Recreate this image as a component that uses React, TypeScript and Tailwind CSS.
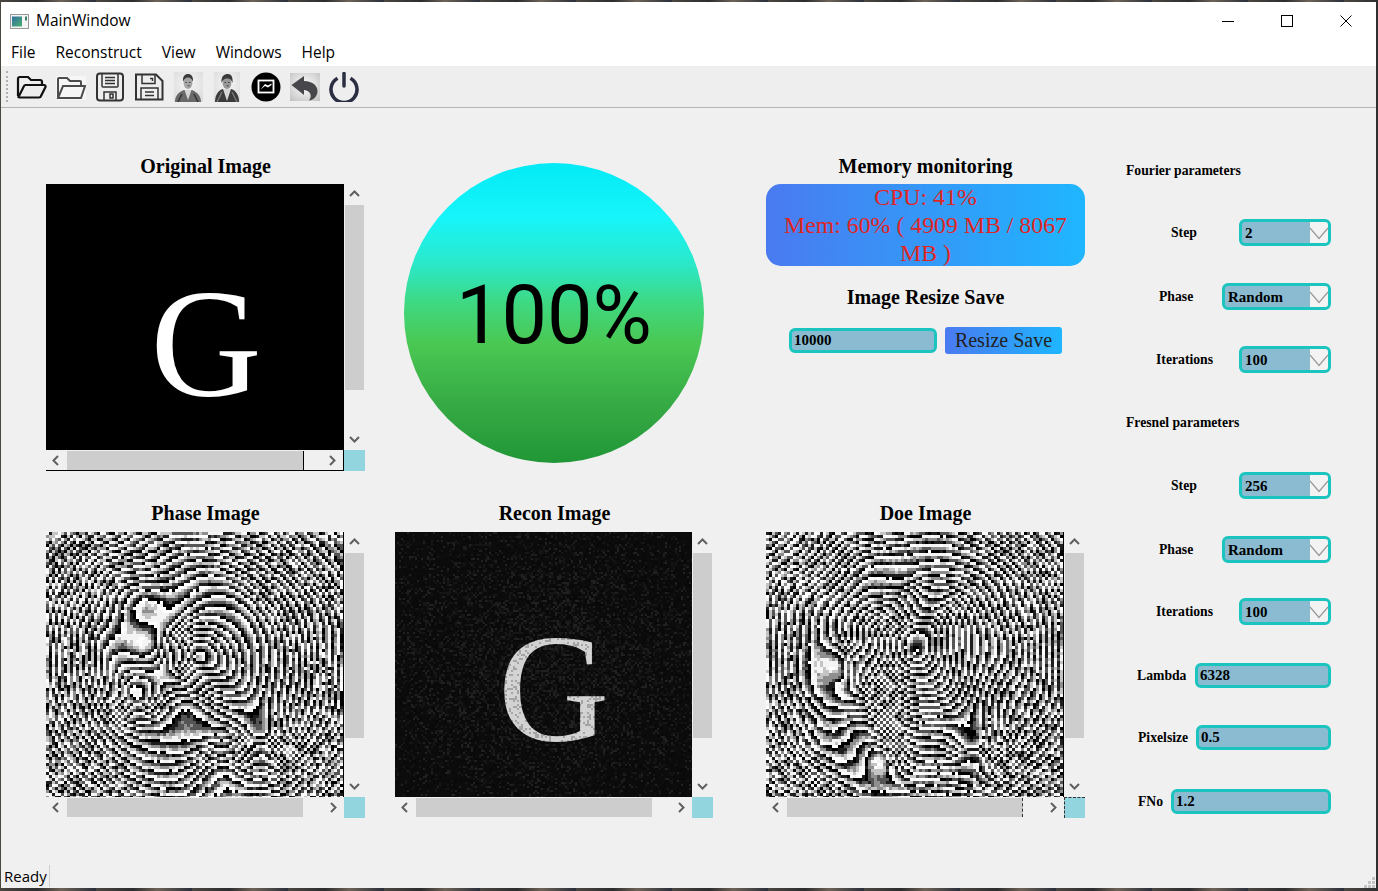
import React from "react";

const serif = "font-['Liberation_Serif',serif]";

type Bump = [number, number, number, number];

function rng(seed: number) {
  let s = seed;
  return () => {
    s = (s * 1664525 + 1013904223) % 4294967296;
    return s / 4294967296;
  };
}

function phasePaths(seed: number, bumps: Bump[], cx0: number, cy0: number) {
  const W = 298, H = 265, B = 3;
  const levels = 7;
  const ds: string[] = Array.from({ length: levels }, () => "");
  const r = rng(seed);
  const wob = Array.from({ length: 6 }, () => [(r() - 0.5) * 0.16, (r() - 0.5) * 0.16, r() * 6, r() * 0.22 + 0.12]);
  for (let y = 0; y < H; y += B) {
    let runStart = 0, runLevel = -1;
    for (let x = 0; x <= W; x += B) {
      let lvl = -2;
      if (x < W) {
        const dx = x - cx0, dy = (y - cy0) * 1.08;
        const rad = Math.hypot(dx, dy);
        let p = 0.1 * rad + 0.00016 * rad * rad;
        for (const [cx, cy, s, A] of bumps) {
          const d = (x - cx) ** 2 + (y - cy) ** 2;
          p += A * Math.exp(-d / (2 * s * s));
        }
        for (const [fx, fy, ph, A] of wob) p += A * Math.sin(fx * x + fy * y + ph);
        p += (r() - 0.5) * (0.07 + rad * 0.0016);
        const v = p - Math.floor(p);
        lvl = Math.min(levels - 1, Math.floor(v * levels));
      }
      if (lvl !== runLevel) {
        if (runLevel >= 0) ds[runLevel] += `M${runStart} ${y}H${x}V${y + B}H${runStart}Z`;
        runStart = x;
        runLevel = lvl;
      }
    }
  }
  return ds;
}

const PHASE_COLORS = ["#000000", "#1e1e1e", "#555555", "#8f8f8f", "#c4c4c4", "#f4f4f4", "#ffffff"];

const phaseA = phasePaths(
  7,
  [
    [105, 112, 20, 4],
    [135, 175, 24, 5],
    [215, 205, 18, -4],
    [85, 165, 15, -3],
    [175, 230, 20, 4],
    [125, 85, 16, 2.500],
  ],
  150,
  125
);
const phaseB = phasePaths(
  19,
  [
    [75, 130, 18, 4],
    [100, 190, 22, 5],
    [210, 215, 18, -4],
    [160, 90, 24, -4],
    [115, 225, 14, 3],
    [135, 60, 20, 2.500],
  ],
  148,
  120
);

function noisePaths() {
  const r = rng(41);
  let light = "", mid = "", dark = "";
  for (let y = 0; y < 265; y += 2) {
    for (let x = 0; x < 297; x += 2) {
      const d = Math.hypot((x - 148) / 148, (y - 132) / 132);
      const v = r();
      const t = 0.5 - 0.3 * d;
      if (v < t * 0.35) light += `M${x} ${y}h2v2h-2z`;
      else if (v < t) mid += `M${x} ${y}h2v2h-2z`;
      else if (v > 0.75) dark += `M${x} ${y}h2v2h-2z`;
    }
  }
  return { light, mid, dark };
}
const noise = noisePaths();

function PhaseImage({ paths }: { paths: string[] }) {
  return (
    <svg width="100%" height="100%" viewBox="0 0 298 265" preserveAspectRatio="none" shapeRendering="crispEdges" className="block">
      {paths.map((d, i) => (
        <path key={i} d={d} fill={PHASE_COLORS[i]} />
      ))}
    </svg>
  );
}

function Chevron({ dir }: { dir: "up" | "down" | "left" | "right" }) {
  const d = {
    up: "M1 7 5.5 2.5 10 7",
    down: "M1 3 5.5 7.5 10 3",
    left: "M7 1 2.5 5.5 7 10",
    right: "M3 1 7.5 5.5 3 10",
  }[dir];
  return (
    <svg width="11" height="11" viewBox="0 0 11 11" className="block">
      <path d={d} fill="none" stroke="#606060" strokeWidth="2" />
    </svg>
  );
}

function Viewer({
  title,
  imgW,
  children,
  outlined,
  dotted,
  imgH,
  lower,
}: {
  title: string;
  imgW: string;
  imgH: string;
  children: React.ReactNode;
  outlined?: boolean;
  dotted?: boolean;
  lower?: boolean;
}) {
  return (
    <div className="w-full">
      <h2 className={`${serif} h-5 ${lower ? "mb-[9px]" : "mb-2"} text-center text-[20px] font-bold leading-5 text-black`}>{title}</h2>
      <div className="flex">
        <div className={`${imgW} ${imgH} shrink-0 overflow-hidden bg-black`}>{children}</div>
        <div className="flex w-[21px] shrink-0 flex-col items-center">
          <div className="flex h-[21px] w-full items-center justify-center"><Chevron dir="up" /></div>
          <div className="h-[185px] w-[19px] bg-[#cdcdcd]" />
          <div className="flex-1" />
          <div className="flex h-[21px] w-full items-center justify-center"><Chevron dir="down" /></div>
        </div>
      </div>
      <div className="flex h-[21px]">
        <div className={`${imgW} flex h-[21px] shrink-0 items-center ${outlined ? "border-b border-r border-black" : ""}`}>
          <div className="flex w-[21px] shrink-0 justify-center"><Chevron dir="left" /></div>
          <div className={`h-[19px] bg-[#cdcdcd] ${outlined ? "w-[237px] border-r border-black" : "w-[236px]"} ${dotted ? "border-r border-dashed border-[#333]" : ""}`} />
          <div className="flex flex-1 justify-end pr-[5px]"><Chevron dir="right" /></div>
        </div>
        <div className={`h-[21px] w-[21px] bg-[#93d5df] ${dotted ? "border-l border-t border-dashed border-[#333]" : ""}`} />
      </div>
    </div>
  );
}

function Field({ value, className }: { value: string; className: string }) {
  return (
    <div className={`${className} ${serif} ml-auto flex items-center rounded-[6px] border-[3px] border-[#1bc4bf] bg-[#8abbd1] pl-[2px] text-[15px] font-bold text-black`}>
      {value}
    </div>
  );
}

function Combo({ value, className }: { value: string; className: string }) {
  return (
    <div className={`${className} ${serif} ml-auto flex h-[27px] items-stretch overflow-hidden rounded-[6px] border-[3px] border-[#1bc4bf] bg-[#8abbd1] text-[15px] font-bold text-black`}>
      <div className="flex flex-1 items-center pl-[3px] pt-px">{value}</div>
      <div className="flex w-[18px] shrink-0 items-center justify-center bg-[#f3f3f3]">
        <svg width="18" height="14" viewBox="0 0 18 14" className="block shrink-0">
          <path d="M0 2 9 12.500 18 2" fill="none" stroke="#999" strokeWidth="1.200" />
        </svg>
      </div>
    </div>
  );
}

function Row({ label, labelClass, children, className }: { label: string; labelClass: string; children: React.ReactNode; className: string }) {
  return (
    <div className={`${className} flex items-center`}>
      <div className={`${labelClass} ${serif} text-[13.700px] font-bold leading-4 text-black`}>{label}</div>
      {children}
    </div>
  );
}

function Portrait({ variant }: { variant: number }) {
  return (
    <svg width="30" height="30" viewBox="0 0 30 30" className="block">
      <defs>
        <radialGradient id={`pb${variant}`} cx="50%" cy="40%" r="70%">
          <stop offset="0%" stopColor="#f6f6f6" />
          <stop offset="100%" stopColor="#dcdcdc" />
        </radialGradient>
        <filter id={`soft${variant}`} x="-10%" y="-10%" width="120%" height="120%">
          <feGaussianBlur stdDeviation="0.500" />
        </filter>
      </defs>
      <rect x={variant ? 2 : 1} width={variant ? 26 : 29} height="30" fill={`url(#pb${variant})`} />
      <g filter={`url(#soft${variant})`}>
        <path d={variant ? "M3 30C3 22 7 18 11 17L19 17C23 18 27 22 27 30Z" : "M2 30C2 23 6 20 11 18L19 18C24 20 28 24 28 30Z"} fill={variant ? "#3a3a3a" : "#6a6a6a"} />
        <path d={variant ? "M11 17 15 29 19 17Z" : "M11.500 18 15 28 18.500 18Z"} fill="#d6d6d6" />
        <path d={variant ? "M5 30 10 20M25 30 20 20" : "M5 30 9 22M25 30 21 22"} stroke={variant ? "#777" : "#333"} strokeWidth="1.500" fill="none" />
        <ellipse cx="15" cy="11" rx="4.400" ry="6" fill={variant ? "#999" : "#a6a6a6"} />
        <path d={variant ? "M9.500 11C9 4 12 2 16 2 20 2 21 6 20.500 11 19.500 7 17 6 14 6.500 12 7 10.500 8.500 9.500 11Z" : "M10 10C9.500 4 12 2 15 2 18 2 20.500 4 20 10 19 7 17 5.500 15 5.500 13 5.500 11 7 10 10Z"} fill="#3a3a3a" />
        <path d="M12.500 10.500h1.500M16 10.500h1.500M14.800 13.800h1.800" stroke="#333" strokeWidth="0.900" />
      </g>
    </svg>
  );
}

function Toolbar() {
  return (
    <div className="flex h-[42px] items-center border-b border-[#b4b4b4] bg-[#eeeeee] pl-[5px]">
      <div className="mr-[8px] h-[31px] w-[2px] border-l-2 border-dotted border-[#b0b0b0]" />
      <div className="flex items-center gap-[9px]">
        <svg width="31" height="30" viewBox="0 0 31 30" className="block">
          <path d="M2 24V7a2 2 0 0 1 2-2h8l3 3h9a2 2 0 0 1 2 2v3" fill="none" stroke="#111" strokeWidth="2.200" />
          <path d="M2.500 25 8 14a2 2 0 0 1 1.500-1H28a1.500 1.500 0 0 1 1.500 2l-4.500 9a2 2 0 0 1-2 1.500H3.500Z" fill="none" stroke="#111" strokeWidth="2.200" />
        </svg>
        <svg width="30" height="30" viewBox="0 0 30 30" className="block">
          <rect y="4" width="30" height="24" fill="#f6f6f6" />
          <path d="M2 25V7a1 1 0 0 1 1-1h8l3 3h10a1 1 0 0 1 1 1v4" fill="none" stroke="#4c4c4c" strokeWidth="2" />
          <path d="M2 26 7 14H29L25 26Z" fill="none" stroke="#4c4c4c" strokeWidth="2" />
        </svg>
        <svg width="30" height="30" viewBox="0 0 30 30" className="block">
          <rect x="2" y="1.500" width="26" height="27" rx="3" fill="none" stroke="#333" strokeWidth="2" />
          <path d="M7 2v12a1 1 0 0 0 1 1h14a1 1 0 0 0 1-1V2" fill="none" stroke="#333" strokeWidth="1.500" />
          <path d="M10 5.500h10M10 8.500h10M10 11.500h10" stroke="#333" strokeWidth="1.300" />
          <path d="M9 28v-8h12v8M15 22v4h3v-4Z" fill="none" stroke="#333" strokeWidth="1.500" />
        </svg>
        <svg width="30" height="30" viewBox="0 0 30 30" className="block">
          <path d="M2 2.500H22L28.500 9V27.500H2Z" fill="none" stroke="#333" strokeWidth="2" />
          <path d="M8 3V11.500H21V3M16 6.500h2.500V9" fill="none" stroke="#333" strokeWidth="1.500" />
          <path d="M7 27V16H24V27M11 20h9M11 23.500h9" fill="none" stroke="#333" strokeWidth="1.500" />
        </svg>
        <Portrait variant={0} />
        <Portrait variant={1} />
        <svg width="30" height="30" viewBox="0 0 30 30" className="block">
          <circle cx="15" cy="15" r="14.500" fill="#000" />
          <rect x="7.500" y="8.500" width="15" height="12" fill="none" stroke="#fff" strokeWidth="1.800" />
          <path d="M9.500 17.500 14 14 17 15.500 20.500 13V11.500L17 13.500 14 12Z" fill="#fff" />
        </svg>
        <svg width="30" height="30" viewBox="0 0 30 30" className="block">
          <defs>
            <radialGradient id="undoBg" cx="50%" cy="45%" r="70%">
              <stop offset="0%" stopColor="#fff" />
              <stop offset="100%" stopColor="#c4c4c4" />
            </radialGradient>
          </defs>
          <rect y="1" width="30" height="28" fill="url(#undoBg)" />
          <path d="M1.500 13 14 4V9C23 9 28 14 27.500 20 27 25 23 28 19 28.500 22 25 21.500 19 14 18V23Z" fill="#47474b" />
        </svg>
        <svg width="30" height="30" viewBox="0 0 30 30" className="block">
          <path d="M8.500 6.200A13 13 0 1 0 21.500 6.200" fill="none" stroke="#2b2d42" strokeWidth="3.500" />
          <path d="M15 1.500V14" stroke="#2b2d42" strokeWidth="3.500" strokeLinecap="round" />
        </svg>
      </div>
    </div>
  );
}

export default function App() {
  return (
    <div className="flex h-[891px] w-[1378px] flex-col bg-[repeating-linear-gradient(90deg,#4a4640_0px,#2c2c2e_37px,#6d6256_61px,#2a2f3a_96px)] pb-[3px] pl-px pr-[2px] pt-[2px]">
      <div className="flex min-h-0 flex-1 flex-col bg-[#f0f0f0] font-['Open_Sans',sans-serif] text-black">
        <div className="flex h-[38px] items-center bg-white pl-[9px]">
          <svg width="19" height="15" viewBox="0 0 19 15" className="mr-[7px] block">
            <defs>
              <linearGradient id="winIcon" x1="0" y1="0" x2="1" y2="1">
                <stop offset="0%" stopColor="#2f6f9f" />
                <stop offset="100%" stopColor="#4caf6f" />
              </linearGradient>
            </defs>
            <rect x="0.500" y="0.500" width="18" height="14" fill="#f5f5f5" stroke="#999" />
            <rect x="2" y="2.500" width="10" height="10" fill="url(#winIcon)" />
            <rect x="15" y="2.500" width="2" height="4" fill="#3d7f6f" />
          </svg>
          <span className="text-[15.500px]">MainWindow</span>
          <div className="ml-auto flex h-full items-center pr-px">
            <div className="flex w-[59px] justify-center">
              <div className="h-px w-3 bg-black" />
            </div>
            <div className="flex w-[59px] justify-center">
              <div className="h-3 w-3 border border-black" />
            </div>
            <div className="flex w-[59px] justify-center">
              <svg width="12" height="12" viewBox="0 0 12 12" className="block">
                <path d="M0.500 0.500 11.500 11.500M11.500 0.500 0.500 11.500" stroke="#000" strokeWidth="1" />
              </svg>
            </div>
          </div>
        </div>
        <div className="flex h-[26px] items-center gap-5 bg-white pl-[10px] text-[15.500px]">
          <span>File</span>
          <span>Reconstruct</span>
          <span>View</span>
          <span>Windows</span>
          <span>Help</span>
        </div>
        <Toolbar />

        <div className="flex min-h-0 flex-1 pl-[45px] pt-[48px]">
          <div className="w-[319px] shrink-0">
            <div className="h-[347px]">
              <Viewer title="Original Image" imgW="w-[298px]" imgH="h-[266px]" outlined>
                <div className={`${serif} flex h-full items-start justify-center pl-[22px] pt-[82px] text-[154px] font-normal leading-[154px] text-white`}>G</div>
              </Viewer>
            </div>
            <Viewer title="Phase Image" imgW="w-[298px]" imgH="h-[265px]" lower>
              <PhaseImage paths={phaseA} />
            </Viewer>
          </div>

          <div className="ml-[30px] w-[319px] shrink-0">
            <div className="h-[347px] pl-[9px] pt-[7px]">
              <div className="flex h-[300px] w-[300px] items-center justify-center rounded-full bg-[linear-gradient(180deg,#03eaf6_0%,#16f5fa_18%,#2be8c8_34%,#3fd880_47%,#4ac853_60%,#38ad46_78%,#219636_100%)] pt-[4px]">
                <span className="font-['Roboto',sans-serif] text-[81px] leading-none text-black">100%</span>
              </div>
            </div>
            <Viewer title="Recon Image" imgW="w-[297px]" imgH="h-[265px]" lower>
              <div className="relative h-full w-full bg-[#0c0c0c]">
                <div className={`${serif} flex h-full items-start justify-center pl-[20px] pt-[79px] text-[154px] leading-[154px] text-[#d2d2d2]`}>G</div>
                <svg width="297" height="265" viewBox="0 0 297 265" shapeRendering="crispEdges" className="absolute left-0 top-0 block">
                  <path d={noise.light} fill="#fff" fillOpacity="0.09" />
                  <path d={noise.mid} fill="#fff" fillOpacity="0.045" />
                  <path d={noise.dark} fill="#000" fillOpacity="0.22" />
                </svg>
              </div>
            </Viewer>
          </div>

          <div className="ml-[52px] w-[319px] shrink-0">
            <div className="h-[347px]">
              <h2 className={`${serif} mb-2 h-5 text-center text-[20px] font-bold leading-5`}>Memory monitoring</h2>
              <div className={`${serif} h-[82px] overflow-hidden rounded-[15px] bg-[linear-gradient(90deg,#4a7af0,#1fb6ff)] px-3 text-center text-[23.800px] leading-[28px] text-[#e02525]`}>
                <div className="-mt-px">
                  CPU: 41%
                  <br />
                  Mem: 60% ( 4909 MB / 8067 MB )
                </div>
              </div>
              <h2 className={`${serif} mt-[21px] h-5 text-center text-[20px] font-bold leading-5`}>Image Resize Save</h2>
              <div className="mt-[20px] flex items-center pl-[23px]">
                <div className={`${serif} flex h-[25px] w-[148px] items-center rounded-[6px] border-[3px] border-[#1bc4bf] bg-[#8abbd1] pl-[2px] text-[15px] font-bold`}>10000</div>
                <div className={`${serif} ml-[8px] flex h-[27px] w-[117px] items-center justify-center rounded-[3px] bg-[linear-gradient(90deg,#4a7af0,#1fb6ff)] pb-[2px] text-[20px] text-[#222]`}>Resize Save</div>
              </div>
            </div>
            <Viewer title="Doe Image" imgW="w-[298px]" imgH="h-[265px]" dotted lower>
              <PhaseImage paths={phaseB} />
            </Viewer>
          </div>

          <div className="ml-[41px] flex w-[205px] shrink-0 flex-col">
            <div className={`${serif} mt-[7px] h-4 text-[13.700px] font-bold leading-4`}>Fourier parameters</div>
            <Row className="mt-[40px]" label="Step" labelClass="ml-[45px]"><Combo value="2" className="w-[92px]" /></Row>
            <Row className="mt-[37px]" label="Phase" labelClass="ml-[33px]"><Combo value="Random" className="w-[109px]" /></Row>
            <Row className="mt-[36px]" label="Iterations" labelClass="ml-[30px]"><Combo value="100" className="w-[92px]" /></Row>
            <div className={`${serif} mt-[42px] h-4 text-[13.700px] font-bold leading-4`}>Fresnel parameters</div>
            <Row className="mt-[41px]" label="Step" labelClass="ml-[45px]"><Combo value="256" className="w-[92px]" /></Row>
            <Row className="mt-[37px]" label="Phase" labelClass="ml-[33px]"><Combo value="Random" className="w-[109px]" /></Row>
            <Row className="mt-[35px]" label="Iterations" labelClass="ml-[30px]"><Combo value="100" className="w-[92px]" /></Row>
            <Row className="mt-[38px]" label="Lambda" labelClass="ml-[11px]"><Field value="6328" className="h-[25px] w-[136px]" /></Row>
            <Row className="mt-[37px]" label="Pixelsize" labelClass="ml-[12px]"><Field value="0.5" className="h-[25px] w-[135px]" /></Row>
            <Row className="mt-[39px]" label="FNo" labelClass="ml-[12px]"><Field value="1.2" className="h-[25px] w-[160px]" /></Row>
          </div>
        </div>

        <div className="flex h-[24px] items-center pl-[3px] text-[15px]">
          <div className="flex h-[22px] w-[46px] items-center border-r border-[#d0d0d0] leading-none">Ready</div>
          <div className="ml-auto mr-[1px] mt-[8px] grid grid-cols-3 gap-px self-end">
            {[0, 0, 1, 0, 1, 1, 1, 1, 1].map((on, i) => (
              <div key={i} className={`h-[3px] w-[3px] ${on ? "bg-[#c4c4c4]" : ""}`} />
            ))}
          </div>
        </div>
      </div>
    </div>
  );
}
